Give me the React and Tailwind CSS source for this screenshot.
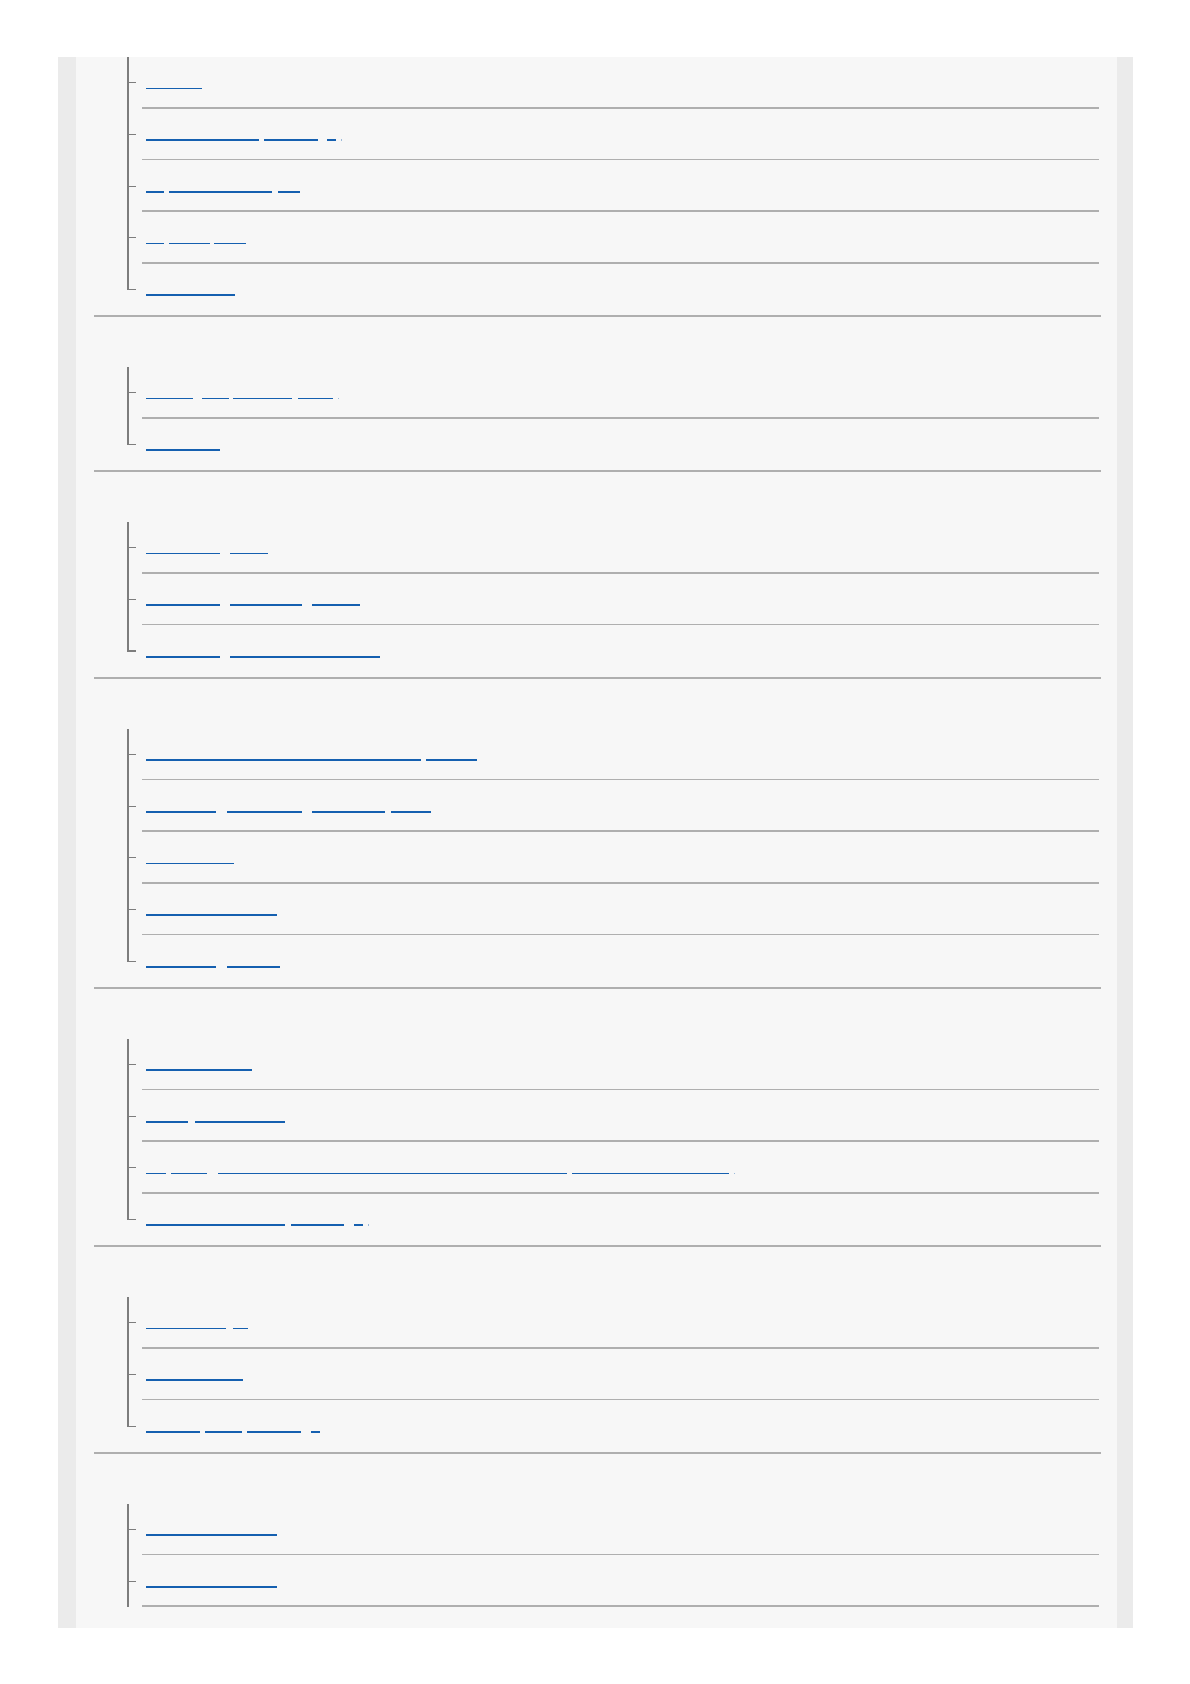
import React from 'react';

// underline segments of each link, as [start, end] x positions on the page
const sections = [
  {
    head: false,
    tail: false,
    rows: [
      [[146, 202]],
      [[146, 259], [263.7, 317.7], [327, 336], [341, 342]],
      [[146, 164.3], [169, 271.7], [278.3, 300]],
      [[146, 164.3], [169, 209.7], [214, 246]],
      [[146, 234.7]],
    ],
  },
  {
    head: true,
    tail: false,
    rows: [
      [[146, 192.7], [202.3, 228.7], [233.3, 292.3], [298, 333], [338, 339]],
      [[146, 220]],
    ],
  },
  {
    head: true,
    tail: false,
    rows: [
      [[146, 220], [230, 268]],
      [[146, 220], [230, 301.7], [312, 360]],
      [[146, 220], [230, 380]],
    ],
  },
  {
    head: true,
    tail: false,
    rows: [
      [[146, 421], [426, 477]],
      [[146, 216.3], [226.7, 301.7], [312, 385], [390.7, 431.3]],
      [[146, 234]],
      [[146, 277]],
      [[146, 216.3], [226.7, 280]],
    ],
  },
  {
    head: true,
    tail: false,
    rows: [
      [[146, 252]],
      [[146, 188], [194.7, 285]],
      [[146, 166], [171, 207], [217.7, 566.7], [572.3, 729.3], [734.5, 735.5]],
      [[146, 285], [291, 344], [354, 363], [368, 369]],
    ],
  },
  {
    head: true,
    tail: false,
    rows: [
      [[146, 226.3], [233, 248]],
      [[146, 243]],
      [[146, 200], [205, 242], [247, 300.7], [311, 319.7]],
    ],
  },
  {
    head: true,
    tail: true,
    rows: [[[146, 277]], [[146, 277]]],
  },
];

function LinkLine({ segs }) {
  let prev = 146;
  return (
    <a href="#" className="flex items-start">
      {segs.map(([a, b], i) => {
        const gap = a - prev;
        prev = b;
        const dot = b - a <= 1.5;
        return (
          <span
            key={i}
            className={dot ? 'h-[1.5px] bg-[#1560b0] opacity-40' : 'h-[1.5px] bg-[#1560b0]'}
            style={{ marginLeft: gap, width: b - a }}
          />
        );
      })}
    </a>
  );
}

function Row({ segs, last, open }) {
  const cut = last && !open;
  return (
    <li className="flex h-[51.7px]">
      <div className="flex w-[9px] shrink-0">
        <div className={cut ? 'h-[26.6px] w-[2px] bg-[#7d7d7d]' : 'h-full w-[2px] bg-[#7d7d7d]'} />
        <div className="flex flex-1 items-center">
          <div className={cut ? 'h-[1.5px] w-full bg-[#7d7d7d]' : 'h-px w-full bg-[#7d7d7d]'} />
        </div>
      </div>
      <div className="ml-[6px] mr-[2px] flex flex-1 flex-col pt-[30.7px]">
        <div className="pl-[4px]">
          <LinkLine segs={segs} />
        </div>
        {!cut && <div className="mt-auto h-[1.6px] bg-[#afafaf]" />}
      </div>
    </li>
  );
}

export default function App() {
  return (
    <div className="min-h-[1684px] bg-white pt-[57px] font-['Liberation_Sans',Arial,sans-serif]">
      <div className="ml-[58px] flex w-[1075px]">
        <div className="w-[18px] shrink-0 bg-[#ebebeb]" />
        <main className="flex-1 bg-[#f7f7f7] pb-[20.8px] pl-[18px] pr-[16px]">
          {sections.map((sec, si) => (
            <section key={si}>
              {sec.head && <div className="h-[50px]" />}
              <ul className="ml-[33px]">
                {sec.rows.map((segs, ri) => (
                  <Row key={ri} segs={segs} last={ri === sec.rows.length - 1} open={sec.tail} />
                ))}
              </ul>
              {!sec.tail && <div className="h-[1.6px] bg-[#afafaf]" />}
            </section>
          ))}
        </main>
        <div className="w-[16px] shrink-0 bg-[#ebebeb]" />
      </div>
    </div>
  );
}
